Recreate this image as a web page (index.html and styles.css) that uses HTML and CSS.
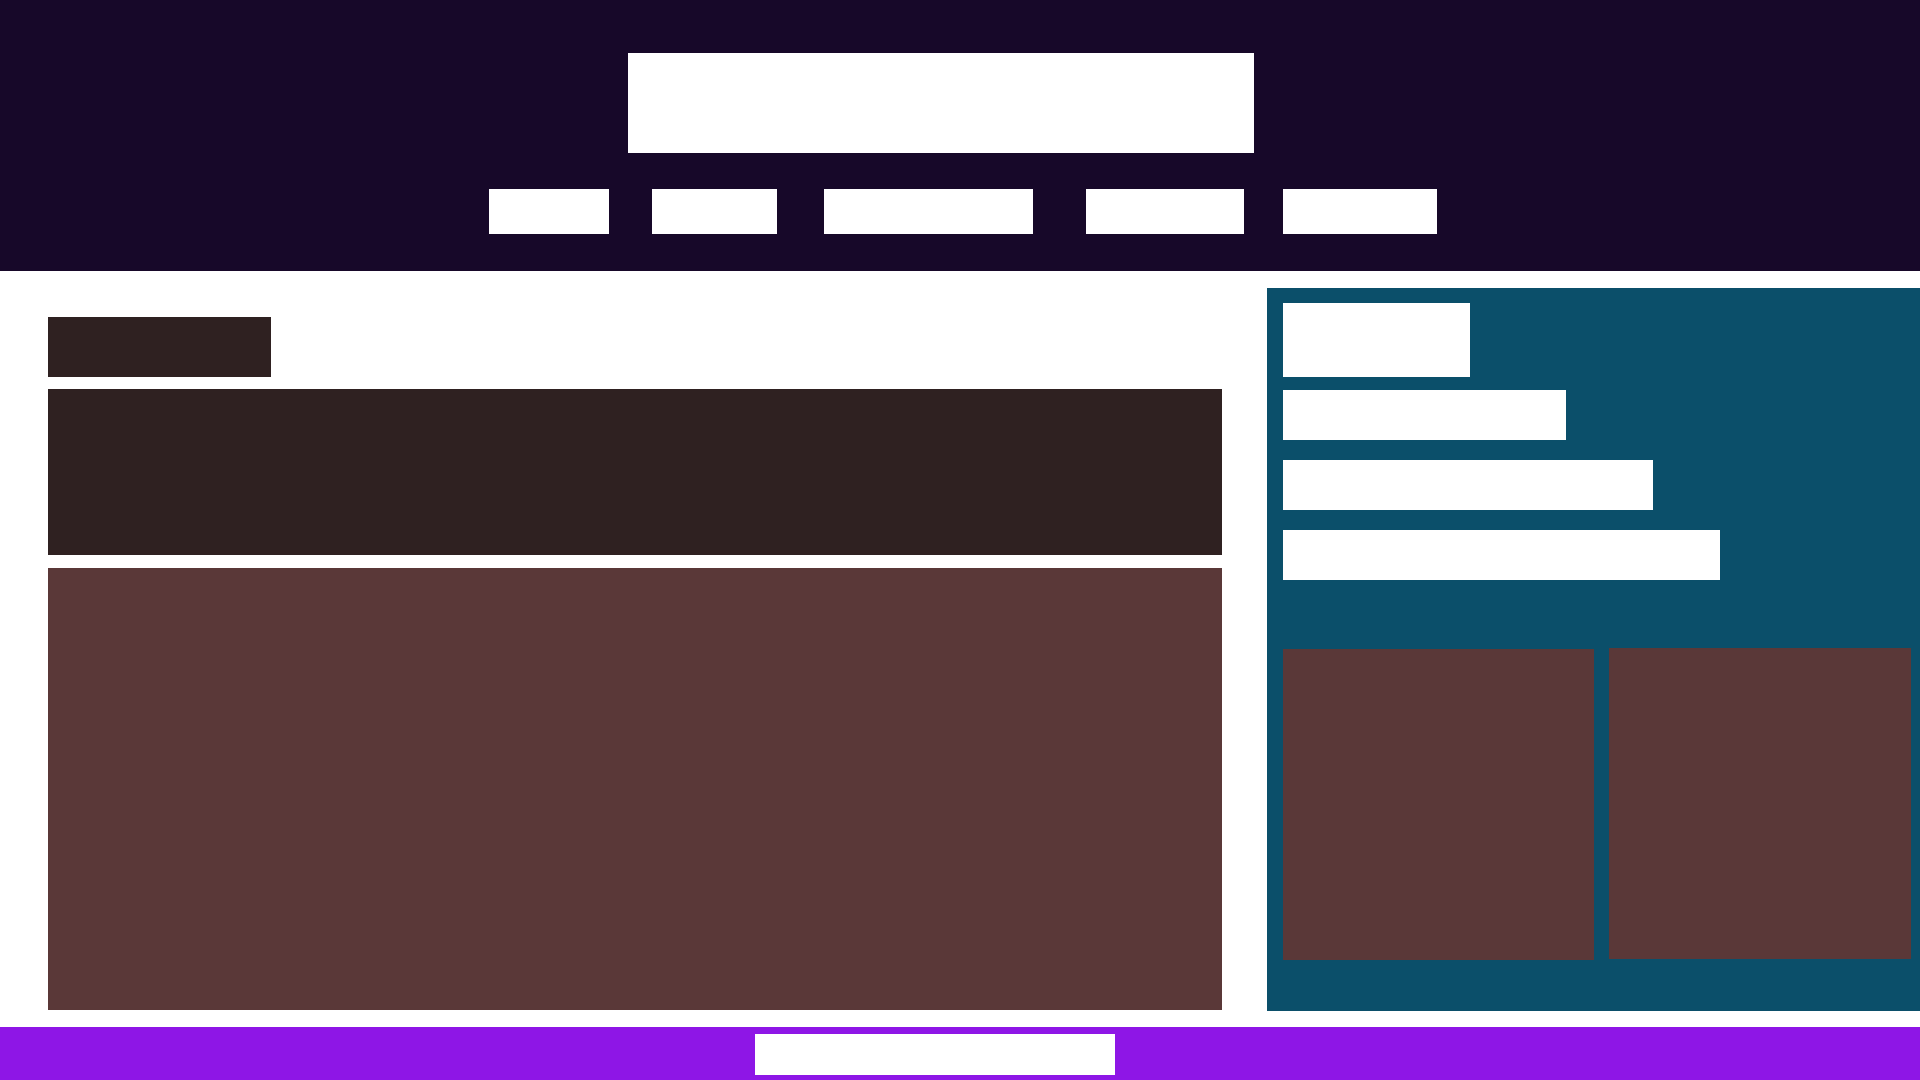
FILE: index.html
```html
<!DOCTYPE html>
<html lang="en">
<head>
<meta charset="utf-8">
<title>Page</title>
<link rel="stylesheet" href="styles.css">
</head>
<body>
<header class="site-header">
  <div class="logo"></div>
  <nav class="nav">
    <span class="nav-item n1"></span>
    <span class="nav-item n2"></span>
    <span class="nav-item n3"></span>
    <span class="nav-item n4"></span>
    <span class="nav-item n5"></span>
  </nav>
</header>
<main class="main">
  <section class="content">
    <div class="title"></div>
    <div class="lead"></div>
    <div class="media"></div>
  </section>
  <aside class="sidebar">
    <div class="line l1"></div>
    <div class="line l2"></div>
    <div class="line l3"></div>
    <div class="line l4"></div>
    <div class="cards">
      <div class="card c1"></div>
      <div class="card c2"></div>
    </div>
  </aside>
</main>
<footer class="site-footer">
  <div class="foot-box"></div>
</footer>
</body>
</html>
```

FILE: styles.css
```css
* { box-sizing: border-box; }
html, body { margin: 0; padding: 0; }
body {
  width: 1920px;
  height: 1080px;
  overflow: hidden;
  background: #ffffff;
  font-family: "Liberation Sans", Arial, sans-serif;
}

.site-header {
  height: 271px;
  background: #170829;
  padding-top: 53px;
  display: flex;
  flex-direction: column;
}
.logo {
  width: 626px;
  height: 100px;
  margin-left: 628px;
  background: #ffffff;
}
.nav {
  display: flex;
  margin-top: 36px;
  margin-left: 489px;
  height: 45px;
}
.nav-item { display: block; height: 45px; background: #ffffff; }
.n1 { width: 120px; }
.n2 { width: 125px; margin-left: 43px; }
.n3 { width: 209px; margin-left: 47px; }
.n4 { width: 158px; margin-left: 53px; }
.n5 { width: 154px; margin-left: 39px; }

.main {
  height: 756px;
  display: flex;
  align-items: flex-start;
}
.content {
  width: 1174px;
  margin-left: 48px;
  padding-top: 46px;
  display: flex;
  flex-direction: column;
}
.title { width: 223px; height: 60px; background: #2f2121; }
.lead { height: 166px; margin-top: 12px; background: #2f2121; }
.media { height: 442px; margin-top: 13px; background: #5a3838; }

.sidebar {
  width: 653px;
  height: 723px;
  margin-left: 45px;
  margin-top: 17px;
  background: #0b4f6a;
  padding: 15px 9px 0 16px;
  display: flex;
  flex-direction: column;
  align-items: flex-start;
}
.line { background: #ffffff; height: 50px; }
.l1 { width: 187px; height: 74px; }
.l2 { width: 283px; margin-top: 13px; }
.l3 { width: 370px; margin-top: 20px; }
.l4 { width: 437px; margin-top: 20px; }
.cards {
  display: flex;
  gap: 15px;
  margin-top: 68px;
  align-items: flex-start;
}
.card { height: 311px; background: #5a3838; }
.c1 { width: 311px; margin-top: 1px; }
.c2 { width: 302px; }

.site-footer {
  height: 53px;
  background: #8e16e6;
  padding-top: 7px;
}
.foot-box {
  width: 360px;
  height: 41px;
  margin-left: 755px;
  background: #ffffff;
}
```
